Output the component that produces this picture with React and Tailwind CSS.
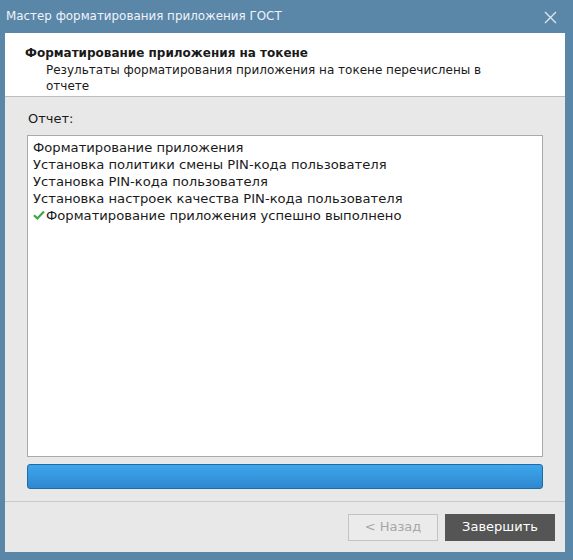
const reportLines = [
  { text: 'Форматирование приложения' },
  { text: 'Установка политики смены PIN-кода пользователя' },
  { text: 'Установка PIN-кода пользователя' },
  { text: 'Установка настроек качества PIN-кода пользователя' },
  { text: 'Форматирование приложения успешно выполнено', done: true },
];

function CheckMark() {
  return (
    <svg width="12" height="10" viewBox="0 0 12 10" className="mr-[1px] shrink-0">
      <path d="M1 5.2 L4.3 8.4 L11 1.4" fill="none" stroke="#3fa844" strokeWidth="2.2" />
    </svg>
  );
}

export default function App() {
  return (
    <div
      className="w-[573px] h-[560px] bg-[#5a86a8] flex flex-col overflow-hidden"
      style={{ fontFamily: '"DejaVu Sans", "Liberation Sans", sans-serif' }}
    >
      {/* window title */}
      <div className="h-[33px] shrink-0 flex items-center justify-between pl-[6px] pr-[16px] pt-[1px] text-[11.9px] text-[#eef3f8]">
        <span>Мастер форматирования приложения ГОСТ</span>
        <svg width="13" height="13" viewBox="0 0 13 13">
          <path d="M1 1 L12 12 M12 1 L1 12" stroke="#dde6ee" strokeWidth="1.4" />
        </svg>
      </div>

      <div className="flex-1 flex flex-col ml-[5px] mr-[8px] mb-[8px] bg-[#e8e8e9]">
        {/* page header */}
        <div className="h-[64px] shrink-0 bg-white border-b border-[#bdbdbd] pl-[20px] pt-[12px] leading-[16px] text-[#1a1a1a]">
          <div className="font-bold text-[12px]">Форматирование приложения на токене</div>
          <div className="pl-[21px] pt-[1px] pr-[60px] text-[12px]">
            Результаты форматирования приложения на токене перечислены в отчете
          </div>
        </div>

        {/* report */}
        <div className="flex-1 flex flex-col px-[22px] pt-[12px] pb-[12px] border-b border-[#c9c9c9]">
          <div className="text-[13px] text-[#1a1a1a] mb-[6px] pl-[1px]">Отчет:</div>
          <div className="flex-1 bg-white border border-[#a9a9a9] pl-[5px] pt-[3px] text-[13.15px] leading-[17px] text-[#1a1a1a]">
            {reportLines.map((line) => (
              <div key={line.text} className="flex items-center">
                {line.done && <CheckMark />}
                <span>{line.text}</span>
              </div>
            ))}
          </div>
          <div className="h-[25px] mt-[7px] shrink-0 rounded-[3px] border border-[#1f6aa8] bg-gradient-to-b from-[#3ea6ec] to-[#2f88cf]" />
        </div>

        {/* buttons */}
        <div className="h-[50px] shrink-0 flex items-center justify-end gap-[7px] pr-[10px]">
          <button className="w-[90px] h-[27px] border border-[#c3c3c3] bg-[#ebebec] text-[13px] text-[#a7a7a7]">
            &lt; Назад
          </button>
          <button className="w-[110px] h-[27px] bg-[#555555] text-[13px] text-white">
            Завершить
          </button>
        </div>
      </div>
    </div>
  );
}
